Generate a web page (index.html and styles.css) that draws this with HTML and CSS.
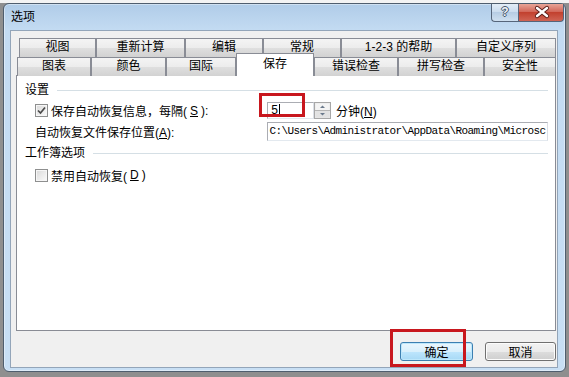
FILE: index.html
```html
<!DOCTYPE html>
<html lang="zh-CN">
<head>
    <meta charset="UTF-8">
    <meta name="viewport" content="width=device-width, initial-scale=1.0">
    <title>选项</title>
    <link rel="stylesheet" href="styles.css">
</head>
<body>
    <div class="window">
        <div class="titlebar">
            <span class="title">选项</span>
            <div class="caption-buttons">
                <div class="cap-btn help">?</div>
                <div class="cap-btn close">
                    <svg width="46" height="18" viewBox="0 0 46 18">
                        <path d="M18 5 L28 13 M28 5 L18 13" stroke="#5a1d18" stroke-width="4.2" stroke-linecap="round"/>
                        <path d="M18 5 L28 13 M28 5 L18 13" stroke="#ffffff" stroke-width="2.4" stroke-linecap="round"/>
                    </svg>
                </div>
            </div>
        </div>

        <div class="client">
            <div class="tabs">
                <div class="tab-row row-back">
                    <div class="tab">视图</div>
                    <div class="tab">重新计算</div>
                    <div class="tab">编辑</div>
                    <div class="tab">常规</div>
                    <div class="tab">1-2-3 的帮助</div>
                    <div class="tab">自定义序列</div>
                </div>
                <div class="tab-row row-front">
                    <div class="tab">图表</div>
                    <div class="tab">颜色</div>
                    <div class="tab">国际</div>
                    <div class="tab active">保存</div>
                    <div class="tab">错误检查</div>
                    <div class="tab">拼写检查</div>
                    <div class="tab">安全性</div>
                </div>
            </div>

            <div class="panel">
                <div class="group-title">设置</div>
                <div class="form-row row-interval">
                    <label class="lead check">
                        <span class="box">
                            <svg width="11" height="11" viewBox="0 0 11 11">
                                <path d="M2 5.5 L4.5 8 L9 2.5" fill="none" stroke="#4a4a4a" stroke-width="1.7"/>
                            </svg>
                        </span>
                        保存自动恢复信息，每隔(<u>S</u>):
                    </label>
                    <div class="spin">
                        <div class="edit num">5<span class="caret"></span></div>
                        <svg class="updown" width="17" height="17" viewBox="0 0 17 17">
                            <rect x="0.5" y="0.5" width="16" height="16" fill="#e9e9e9" stroke="#a7a7a7"/>
                            <rect x="1.5" y="1.5" width="14" height="6.5" fill="#f4f4f4"/>
                            <rect x="1.5" y="9" width="14" height="6.5" fill="#e2e2e2"/>
                            <line x1="1" y1="8.5" x2="16" y2="8.5" stroke="#b5b5b5"/>
                            <path d="M6 6 L8.5 3.5 L11 6 Z" fill="#6b7a8c"/>
                            <path d="M6 11 L8.5 13.5 L11 11 Z" fill="#6b7a8c"/>
                        </svg>
                    </div>
                    <span class="unit">分钟(<u>N</u>)</span>
                </div>
                <div class="form-row row-path">
                    <span class="lead">自动恢复文件保存位置(<u>A</u>):</span>
                    <div class="edit path">C:\Users\Administrator\AppData\Roaming\Microsc</div>
                </div>

                <div class="group-title second">工作簿选项</div>
                <div class="form-row row-disable">
                    <label class="lead check">
                        <span class="box"></span>
                        禁用自动恢复(<u>D</u>)
                    </label>
                </div>
            </div>

            <div class="buttons">
                <button class="btn default">确定</button>
                <button class="btn">取消</button>
            </div>
        </div>

        <!-- red annotation boxes drawn over the dialog -->
        <div class="mark mark-input"></div>
        <div class="mark mark-ok"></div>
    </div>
</body>
</html>
```

FILE: styles.css
```css
* {
    margin: 0;
    padding: 0;
    box-sizing: border-box;
}

body {
    width: 569px;
    height: 377px;
    overflow: hidden;
    padding: 3px 3px 0 3px;
    background: linear-gradient(#f3f3f3 0, #f3f3f3 3px, #8f8f8f 3px);
    font-family: "Liberation Sans", "Noto Sans CJK SC", sans-serif;
    font-size: 12px;
    color: #000;
}

/* window frame */
.window {
    position: relative;
    width: 563px;
    height: 369px;
    border: 1px solid #4f5e6e;
    border-radius: 6px;
    padding: 0 7px 3px 6px;
    background: linear-gradient(#b0cce8, #c3dbf2 26px, #c8dff4);
    box-shadow: inset 0 0 0 1px rgba(255, 255, 255, 0.4);
}

.titlebar {
    display: flex;
    justify-content: space-between;
    height: 26px;
}

.title {
    padding-left: 1px;
    line-height: 26px;
    font-size: 12px;
}

.caption-buttons {
    display: flex;
    margin-right: -6px;
    align-self: flex-start;
}

.cap-btn {
    height: 18px;
    border: 1px solid #56657a;
    border-top: none;
}

.help {
    width: 27px;
    border-right: none;
    border-radius: 0 0 0 4px;
    background: linear-gradient(#e3edf7, #c9dbee 50%, #b7cde4 50%, #cfe0f0);
    text-align: center;
    line-height: 17px;
    font-family: "Liberation Sans", sans-serif;
    font-weight: bold;
    font-size: 12px;
    color: #eef2f7;
    text-shadow: 1px 0 #46566a, -1px 0 #46566a, 0 1px #46566a, 0 -1px #46566a;
}

.close {
    width: 46px;
    border-radius: 0 0 4px 0;
    background: linear-gradient(#e8a597, #d2685a 45%, #c2412f 50%, #cf6454);
}

.close svg {
    display: block;
    margin-top: -1px;
}

/* client area */
.client {
    height: 338px;
    border: 1px solid #93a5b9;
    background: #f0f0f0;
}

.tabs {
    margin: 7px 0 0 5px;
    width: 540px;
}

.tab-row {
    display: grid;
}

.row-back {
    height: 19px;
    padding-left: 3px;
    grid-template-columns: 77px 89px 78px 78px 115px 100px;
}

.row-front {
    height: 18px;
    padding-left: 1px;
    grid-template-columns: 74px 75px 70px 78px 84px 86px 72px;
}

.tab {
    border: 1px solid #898c95;
    border-bottom: none;
    background: linear-gradient(#f4f4f4, #ececec 50%, #dfdfdf 50%, #d2d2d2);
    text-align: center;
    line-height: 17px;
    white-space: nowrap;
}

.tab.active {
    position: relative;
    z-index: 2;
    height: 23px;
    margin-top: -4px;
    padding-top: 2px;
    background: #fff;
}

.panel {
    margin-left: 5px;
    width: 540px;
    height: 256px;
    border: 1px solid #898c95;
    background: #fff;
    padding: 8px 7px 0 0;
}

.group-title {
    display: flex;
    align-items: center;
    gap: 8px;
    height: 13px;
    padding-left: 8px;
    line-height: 13px;
}

.group-title::after {
    content: "";
    flex: 1;
    height: 1px;
    background: #d5dfe5;
}

.group-title.second {
    margin-top: 6px;
}

.form-row {
    display: flex;
    align-items: center;
    padding-left: 18px;
}

.row-interval {
    height: 17px;
    margin-top: 5px;
}

.row-path {
    height: 19px;
    margin-top: 3px;
}

.row-disable {
    height: 16px;
    margin-top: 7px;
}

.lead {
    width: 232px;
    white-space: nowrap;
}

.check {
    display: flex;
    align-items: center;
    gap: 3px;
}

.box {
    width: 13px;
    height: 13px;
    border: 1px solid #8e8f8f;
    background: linear-gradient(135deg, #d9d9d9, #fbfbfb);
    box-shadow: inset 0 0 0 1px #f6f6f6;
}

.box svg {
    display: block;
}

.spin {
    display: flex;
}

.edit {
    border: 1px solid #abadb3;
    border-right-color: #dbdfe6;
    border-bottom-color: #e3e9ef;
    background: #fff;
    white-space: nowrap;
    overflow: hidden;
}

.num {
    display: flex;
    align-items: center;
    width: 47px;
    height: 17px;
    padding-left: 3px;
    font-family: "Liberation Mono", monospace;
    font-size: 12px;
}

.caret {
    width: 1px;
    height: 13px;
    background: #000;
    margin-left: 1px;
}

.updown {
    display: block;
}

.unit {
    margin-left: 5px;
}

.path {
    width: 282px;
    height: 19px;
    padding-left: 2px;
    line-height: 17px;
    font-family: "Liberation Mono", monospace;
    font-size: 11px;
    letter-spacing: -0.6px;
}

/* bottom buttons */
.buttons {
    display: flex;
    justify-content: flex-end;
    gap: 12px;
    margin-top: 11px;
    padding-right: 1px;
}

.btn {
    width: 71px;
    height: 19px;
    border: 1px solid #707070;
    border-radius: 3px;
    background: linear-gradient(#f2f2f2, #ebebeb 50%, #dddddd 50%, #cfcfcf);
    box-shadow: inset 0 0 0 1px #fcfcfc;
    font-family: "Noto Sans CJK SC", sans-serif;
    font-size: 12px;
    line-height: 17px;
    color: #000;
}

.btn.default {
    width: 73px;
    border-color: #3c7fb1;
    background: linear-gradient(#eaf6fd, #d9f0fc 50%, #bee6fd 50%, #a7d9f5);
    box-shadow: inset 0 0 0 1px #bde7fb;
}

/* annotation overlay */
.mark {
    position: absolute;
    border: 3px solid #c8171e;
}

.mark-input {
    left: 255px;
    top: 89px;
    width: 46px;
    height: 24px;
}

.mark-ok {
    left: 386px;
    top: 325px;
    width: 76px;
    height: 38px;
}
```
